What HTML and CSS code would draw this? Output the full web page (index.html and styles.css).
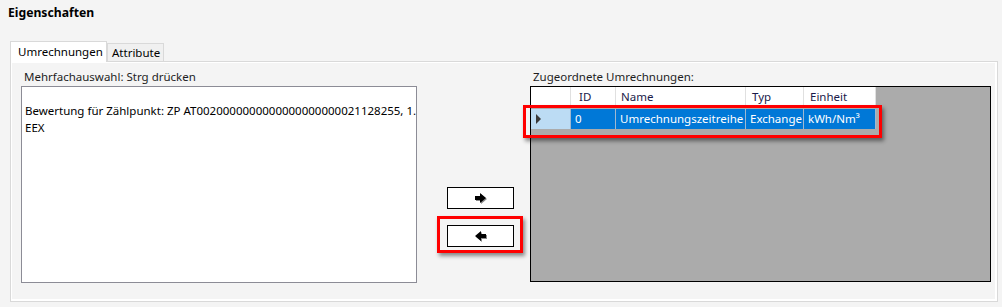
FILE: index.html
```html
<!DOCTYPE html>
<html lang="de">
<head>
    <meta charset="UTF-8">
    <title>Eigenschaften</title>
    <link rel="stylesheet" href="styles.css">
</head>
<body>
<div class="title">Eigenschaften</div>

<div class="tabs">
    <div class="tab active">Umrechnungen</div>
    <div class="tab">Attribute</div>
</div>

<div class="panel">
    <div class="col_left">
        <div class="label">Mehrfachauswahl: Strg drücken</div>
        <div class="listbox">
            <div class="list_item">Bewertung für Zählpunkt: ZP AT0020000000000000000000021128255, 1.9 EUR/MWh<br>EEX</div>
        </div>
    </div>

    <div class="col_mid">
        <div class="move_btn">
            <svg width="14" height="11" viewBox="0 0 14 11">
                <polygon points="2,4 7,4 7,1 13,6 7,11 7,8 2,8" fill="#8a8a8a"/>
                <polygon points="1,3 6,3 6,0 12,5 6,10 6,7 1,7" fill="#000"/>
            </svg>
        </div>
        <div class="move_btn">
            <svg width="14" height="11" viewBox="0 0 14 11">
                <polygon points="13,4 8,4 8,1 2,6 8,11 8,8 13,8" fill="#8a8a8a"/>
                <polygon points="12,3 7,3 7,0 1,5 7,10 7,7 12,7" fill="#000"/>
            </svg>
        </div>
        <div class="mark mark_btn"></div>
    </div>

    <div class="col_right">
        <div class="label">Zugeordnete Umrechnungen:</div>
        <div class="grid">
            <div class="grid_row grid_head">
                <div class="cell c_rh"></div>
                <div class="cell c_id">ID</div>
                <div class="cell c_name">Name</div>
                <div class="cell c_typ">Typ</div>
                <div class="cell c_unit">Einheit</div>
            </div>
            <div class="grid_row grid_sel">
                <div class="cell c_rh"><span class="row_arrow"></span></div>
                <div class="cell c_id">0</div>
                <div class="cell c_name">Umrechnungszeitreihe</div>
                <div class="cell c_typ">Exchange</div>
                <div class="cell c_unit">kWh/Nm³</div>
            </div>
        </div>
        <div class="mark mark_row"></div>
    </div>
</div>
</body>
</html>
```

FILE: styles.css
```css
body {
    margin: 0;
    padding: 0;
    width: 1002px;
    height: 307px;
    overflow: hidden;
    background: #f4f4f4;
    font-family: "Noto Sans", "Open Sans", sans-serif;
    font-size: 11.5px;
    color: #1e1e1e;
}

.title {
    height: 40px;
    padding-left: 8px;
    padding-top: 4px;
    box-sizing: border-box;
    font-size: 12.2px;
    font-weight: bold;
    color: #000;
}

.tabs {
    display: flex;
    align-items: flex-end;
    height: 21px;
    margin-left: 10px;
}

.tab {
    height: 17px;
    line-height: 18px;
    padding: 0 3px 0 4px;
    border: 1px solid #d9d9d9;
    border-bottom: 0;
    background: #f0f0f0;
    color: #000;
}

.tab.active {
    width: 97px;
    box-sizing: border-box;
    height: 21px;
    line-height: 19px;
    padding: 0 0 0 7px;
    background: #fff;
    margin-bottom: -1px;
    position: relative;
    z-index: 1;
}

.panel {
    display: flex;
    width: 988px;
    height: 241px;
    margin-left: 10px;
    box-sizing: border-box;
    border: 1px solid #d9d9d9;
    box-shadow: inset 1px 1px 0 #fff, inset -2px -2px 0 #fff;
    padding: 7px 0 0 10px;
}

.label {
    height: 16px;
    line-height: 16px;
    padding-left: 3px;
    margin-bottom: 1px;
    color: #1e1e1e;
}

.col_left {
    width: 396px;
}

.listbox {
    height: 197px;
    box-sizing: border-box;
    border: 1px solid #8c8c96;
    background: #fff;
    overflow: hidden;
}

.list_item {
    padding: 15px 0 0 3px;
    line-height: 17px;
    white-space: nowrap;
    color: #000;
}

.col_mid {
    position: relative;
    width: 67px;
    margin-left: 30px;
    padding-top: 118px;
}

.move_btn {
    display: flex;
    align-items: center;
    justify-content: center;
    height: 22px;
    box-sizing: border-box;
    border: 1px solid #000;
    background: #fff;
    margin-bottom: 16px;
}

.col_right {
    position: relative;
    width: 461px;
    margin-left: 16px;
}

.grid {
    height: 196px;
    box-sizing: border-box;
    border: 1px solid #000;
    background: #ababab;
}

.grid_row {
    display: flex;
    height: 20px;
}

.grid_head {
    margin-bottom: 2px;
}

.cell {
    height: 20px;
    line-height: 20px;
    box-sizing: border-box;
    padding-left: 6px;
    border-right: 1px solid #e0e0e0;
    white-space: nowrap;
    overflow: hidden;
}

.grid_head .cell {
    background: #fff;
    color: #1a1a4a;
}

.grid_head .c_id {
    padding-left: 8px;
}

.grid_head .c_name {
    padding-left: 5px;
}

.grid_sel .cell {
    background: #0078d7;
    color: #fff;
    border-right-color: #a0b8d0;
    padding-left: 4px;
}

.grid_sel .c_rh {
    background: #bcdcf4;
}

.c_rh { width: 40px; }
.c_id { width: 45px; }
.c_name { width: 130px; }
.c_typ { width: 58px; }
.c_unit { width: 72px; }

.row_arrow {
    display: inline-block;
    width: 0;
    height: 0;
    margin-left: 1px;
    margin-top: 5px;
    vertical-align: top;
    border-top: 5px solid transparent;
    border-bottom: 5px solid transparent;
    border-left: 5px solid #3a3a3a;
}

.mark {
    position: absolute;
    border: 3px solid #f00;
    box-shadow: 2px 3px 4px rgba(0, 0, 0, 0.45);
}

.mark_btn {
    left: -10px;
    top: 147px;
    width: 80px;
    height: 31px;
}

.mark_row {
    left: -7px;
    top: 36px;
    width: 353px;
    height: 27px;
}
```
